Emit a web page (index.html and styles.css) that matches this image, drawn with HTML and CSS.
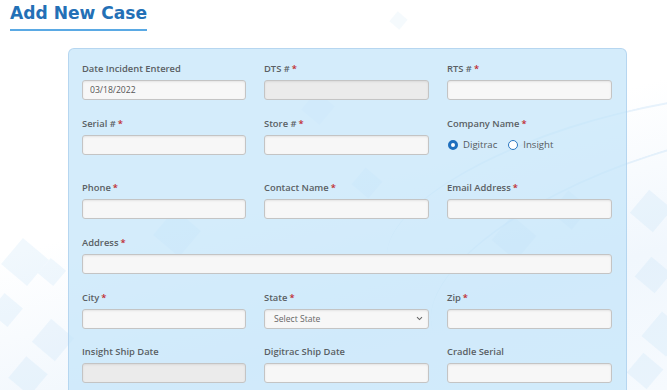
FILE: index.html
```html
<!DOCTYPE html>
<html lang="en">
<head>
<meta charset="utf-8">
<title>Add New Case</title>
<link rel="stylesheet" href="styles.css">
</head>
<body>
<div class="bg" aria-hidden="true">
  <span class="dia d1"></span><span class="dia d2"></span><span class="dia d3"></span>
  <span class="dia d4"></span><span class="dia d5"></span><span class="dia d6"></span>
  <span class="dia d7"></span><span class="dia d8"></span><span class="dia d9"></span>
  <span class="dia d10"></span><span class="dia d11"></span><span class="dia d12"></span>
  <span class="dia d13"></span><span class="dia d14"></span><span class="dia d15"></span>
  <span class="swoosh s1"></span><span class="swoosh s2"></span>
</div>
<header class="page-head">
  <h1 class="title">Add New Case</h1>
</header>
<main class="panel">
  <form class="grid">
    <div class="field">
      <label class="lbl">Date Incident Entered</label>
      <input class="inp" type="text" value="03/18/2022">
    </div>
    <div class="field">
      <label class="lbl">DTS #<span class="req">*</span></label>
      <input class="inp disabled" type="text" disabled>
    </div>
    <div class="field">
      <label class="lbl">RTS #<span class="req">*</span></label>
      <input class="inp" type="text">
    </div>

    <div class="field">
      <label class="lbl">Serial #<span class="req">*</span></label>
      <input class="inp" type="text">
    </div>
    <div class="field">
      <label class="lbl">Store #<span class="req">*</span></label>
      <input class="inp" type="text">
    </div>
    <div class="field">
      <label class="lbl">Company Name<span class="req">*</span></label>
      <div class="radios">
        <span class="radio"><span class="dot checked"></span>Digitrac</span>
        <span class="radio"><span class="dot"></span>Insight</span>
      </div>
    </div>

    <div class="field">
      <label class="lbl">Phone<span class="req">*</span></label>
      <input class="inp" type="text">
    </div>
    <div class="field">
      <label class="lbl">Contact Name<span class="req">*</span></label>
      <input class="inp" type="text">
    </div>
    <div class="field">
      <label class="lbl">Email Address<span class="req">*</span></label>
      <input class="inp" type="text">
    </div>

    <div class="field full">
      <label class="lbl">Address<span class="req">*</span></label>
      <input class="inp" type="text">
    </div>

    <div class="field">
      <label class="lbl">City<span class="req">*</span></label>
      <input class="inp" type="text">
    </div>
    <div class="field">
      <label class="lbl">State<span class="req">*</span></label>
      <div class="inp select">
        <span>Select State</span>
        <svg class="chev" width="7" height="5" viewBox="0 0 7 5"><path d="M1 1.2 L3.5 3.6 L6 1.2" fill="none" stroke="#666" stroke-width="1.1"/></svg>
      </div>
    </div>
    <div class="field">
      <label class="lbl">Zip<span class="req">*</span></label>
      <input class="inp" type="text">
    </div>

    <div class="field">
      <label class="lbl">Insight Ship Date</label>
      <input class="inp disabled" type="text" disabled>
    </div>
    <div class="field">
      <label class="lbl">Digitrac Ship Date</label>
      <input class="inp" type="text">
    </div>
    <div class="field">
      <label class="lbl">Cradle Serial</label>
      <input class="inp" type="text">
    </div>
  </form>
</main>
</body>
</html>
```
FILE: styles.css
```css
* { box-sizing: border-box; }
html, body { margin: 0; padding: 0; }
body {
  width: 667px;
  height: 390px;
  overflow: hidden;
  background: #ffffff;
  font-family: "Open Sans", "DejaVu Sans", sans-serif;
  position: relative;
}
.bg {
  position: absolute;
  inset: 0;
  overflow: hidden;
  z-index: 0;
  background: linear-gradient(165deg, #ffffff 45%, #f1f7fd 75%, #f6fafe 100%);
}
.dia {
  position: absolute;
  width: 24px;
  height: 24px;
  background: rgba(170, 210, 242, 0.16);
  transform: rotate(40deg);
}
.d1 { left: 8px; top: 245px; width: 34px; height: 34px; }
.d2 { left: 38px; top: 325px; width: 30px; height: 30px; }
.d3 { left: 14px; top: 362px; width: 28px; height: 28px; }
.d4 { left: 42px; top: 262px; width: 20px; height: 20px; }
.d5 { left: -6px; top: 298px; width: 24px; height: 24px; }
.d6 { left: 636px; top: 196px; width: 30px; height: 30px; }
.d7 { left: 640px; top: 262px; width: 26px; height: 26px; }
.d8 { left: 648px; top: 318px; width: 32px; height: 32px; }
.d9 { left: 632px; top: 358px; width: 26px; height: 26px; }
.d10 { left: 392px; top: 14px; width: 13px; height: 13px; background: rgba(170,210,242,0.12); }
.d11 { left: 160px; top: 216px; width: 34px; height: 34px; background: rgba(130,190,238,0.13); }
.d12 { left: 356px; top: 172px; width: 22px; height: 22px; background: rgba(130,190,238,0.12); }
.d13 { left: 498px; top: 222px; width: 32px; height: 32px; background: rgba(130,190,238,0.12); }
.d14 { left: 306px; top: 96px; width: 24px; height: 24px; background: rgba(130,190,238,0.10); }
.d15 { left: 556px; top: 196px; width: 28px; height: 28px; background: rgba(130,190,238,0.12); }
.swoosh {
  position: absolute;
  border-radius: 50%;
  border-top: 2px solid rgba(190, 220, 245, 0.35);
}
.s1 { left: 380px; top: 110px; width: 520px; height: 180px; transform: rotate(-14deg); }
.s2 { left: 420px; top: 150px; width: 520px; height: 200px; transform: rotate(-18deg); }

.page-head {
  position: relative;
  z-index: 1;
  padding: 0 0 0 10px;
  height: 31px;
}
.title {
  margin: 0;
  display: inline-block;
  font-family: "DejaVu Sans", sans-serif;
  font-size: 17.1px;
  font-weight: bold;
  color: #2370b6;
  line-height: 26px;
  padding-bottom: 3px;
  border-bottom: 2px solid #5aa9e4;
  letter-spacing: 0;
}

.panel {
  position: relative;
  z-index: 1;
  margin: 17px 0 0 68px;
  width: 559px;
  height: 360px;
  background: rgba(196, 228, 250, 0.72);
  border: 1px solid rgba(170, 205, 235, 0.7);
  border-radius: 6px;
  padding: 14px 14px 0 13px;
}
.grid {
  display: grid;
  grid-template-columns: 164px 165px 165px;
  column-gap: 18px;
  row-gap: 17.7px;
  margin: 0;
}
.field { display: flex; flex-direction: column; }
.field.full { grid-column: 1 / -1; }
.lbl {
  font-family: "Open Sans", sans-serif;
  font-size: 9.4px;
  line-height: 12px;
  font-weight: 600;
  color: #5a5f64;
  margin-bottom: 5px;
  white-space: nowrap;
}
.req { color: #c0282e; margin-left: 2px; }
.inp {
  display: block;
  width: 100%;
  height: 20px;
  margin: 0;
  padding: 0 7px;
  border: 1px solid #c4c4c4;
  border-radius: 3px;
  background: #f7f7f7;
  box-shadow: inset 0 1px 2px rgba(0,0,0,0.08);
  font-family: "Open Sans", sans-serif;
  font-size: 8.6px;
  color: #555;
  outline: none;
}
.inp.disabled { background: #ebebeb; }
.select {
  display: flex;
  align-items: center;
  justify-content: space-between;
  padding: 0 5px 0 9px;
  color: #666;
}
.radios {
  display: flex;
  align-items: center;
  gap: 11px;
  height: 30px;
  padding-bottom: 10px;
  font-family: "Open Sans", sans-serif;
  font-size: 9.6px;
  color: #555b60;
}
.radio { display: flex; align-items: center; gap: 5px; }
.radio:first-child { margin-left: 1px; }
.dot {
  width: 10px;
  height: 10px;
  border-radius: 50%;
  border: 1.3px solid #2a77c0;
  background: #fff;
  display: inline-block;
}
.dot.checked {
  border: 3px solid #1e6fbe;
  background: #ffffff;
}
```
